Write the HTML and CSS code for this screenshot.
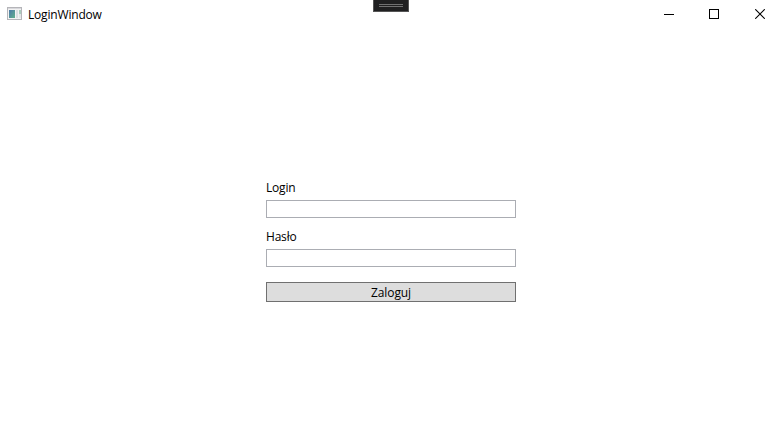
FILE: index.html
```html
<!DOCTYPE html>
<html lang="pl">
<head>
<meta charset="utf-8">
<title>LoginWindow</title>
<link rel="stylesheet" href="styles.css">
</head>
<body>
<div class="window">
  <header class="titlebar">
    <svg class="app-icon" width="15" height="13" viewBox="0 0 15 13" shape-rendering="crispEdges" aria-hidden="true">
      <defs>
        <linearGradient id="pane" x1="0" y1="0" x2="1" y2="1">
          <stop offset="0" stop-color="#4c78a8"/>
          <stop offset="1" stop-color="#62b28c"/>
        </linearGradient>
      </defs>
      <rect x=".5" y=".5" width="14" height="12" fill="#f3f3f3" stroke="#b5b5b9"/>
      <rect x="1" y="1" width="13" height="1" fill="#d8d8dc"/>
      <rect x="2" y="3" width="6" height="8" fill="url(#pane)"/>
      <rect x="9" y="3" width="2" height="8" fill="#dcdfe2"/>
      <rect x="12" y="3" width="2" height="4" fill="#a9cdbd"/>
      <rect x="12" y="7" width="2" height="4" fill="#e4e6e8"/>
    </svg>
    <h1 class="title">LoginWindow</h1>
    <div class="controls">
      <button class="control" aria-label="Minimize"><svg width="10" height="10" shape-rendering="crispEdges"><path d="M0 5.5H10"/></svg></button>
      <button class="control" aria-label="Maximize"><svg width="10" height="10" shape-rendering="crispEdges"><path d="M.5.5h9v9h-9z"/></svg></button>
      <button class="control close" aria-label="Close"><svg width="10" height="10"><path d="M.2.2l9.6 9.6M9.8.2L.2 9.8"/></svg></button>
    </div>
    <div class="debug-handle"></div>
  </header>
  <main class="content">
    <form class="login-form">
      <label class="label" for="login">Login</label>
      <input class="field" id="login" type="text">
      <label class="label" for="password">Hasło</label>
      <input class="field" id="password" type="password">
      <button class="submit" type="button">Zaloguj</button>
    </form>
  </main>
</div>
</body>
</html>
```
FILE: styles.css
```css
* {
  box-sizing: border-box;
}

body {
  margin: 0;
  background: #fff;
  color: #000;
  font: 12px/16px "Open Sans", "Noto Sans", sans-serif;
}

.window {
  display: flex;
  flex-direction: column;
  height: 438px;
  overflow: hidden;
}

.titlebar {
  position: relative;
  display: flex;
  align-items: center;
  height: 28px;
  padding-left: 7px;
}

.app-icon {
  display: block;
  margin-bottom: 1px;
}

.title {
  margin: 1px 0 0 6px;
  font-size: 12px;
  font-weight: 400;
  letter-spacing: -0.18px;
}

.controls {
  display: flex;
  gap: 35px;
  height: 28px;
  margin-left: auto;
  padding-right: 17px;
}

.control {
  display: flex;
  align-items: center;
  justify-content: center;
  width: 10px;
  padding: 0;
  border: 0;
  background: none;
}

.close {
  margin-left: 1px;
}

.control svg {
  flex: none;
  fill: none;
  stroke: #000;
  stroke-width: 1.1;
}

.debug-handle {
  position: absolute;
  top: 0;
  left: 373px;
  width: 36px;
  height: 12px;
  border: 1px solid #555;
  border-top: 0;
  background: #1f1f20;
}

.debug-handle::before {
  content: "";
  display: block;
  width: 24px;
  height: 1px;
  margin: 4px auto 0;
  border: solid #707070;
  border-width: 1px 0;
}

.content {
  display: flex;
  justify-content: center;
  padding-top: 152px;
}

.login-form {
  display: flex;
  flex-direction: column;
  width: 250px;
}

.label {
  height: 16px;
  margin-bottom: 4px;
  letter-spacing: -0.2px;
}

.field {
  width: 250px;
  height: 18px;
  margin: 0 0 11px;
  padding: 0 3px;
  border: 1px solid #abadb3;
  background: #fff;
  font: inherit;
  outline: 0;
}

.submit {
  height: 20px;
  margin-top: 4px;
  padding: 2px 1px 0;
  border: 1px solid #707070;
  background: #ddd;
  color: #000;
  font: inherit;
  letter-spacing: -0.1px;
}
```
